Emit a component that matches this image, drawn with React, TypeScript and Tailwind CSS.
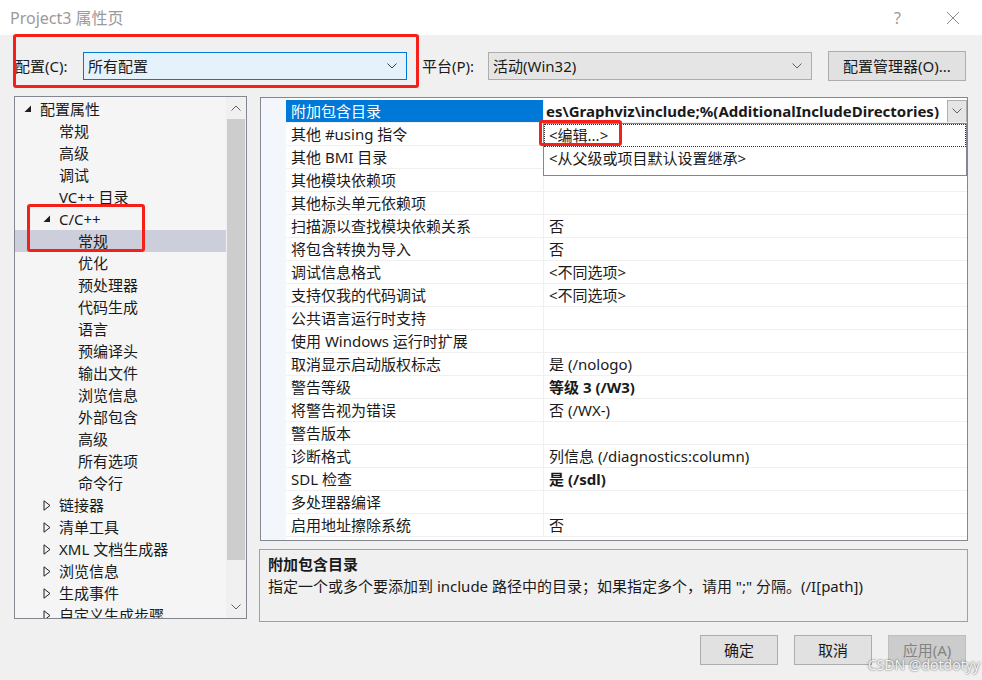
import React from 'react'

const font = "font-['Noto_Sans','Noto_Sans_CJK_SC',sans-serif]"

type TreeItem = {
  label: string
  level: number
  state?: 'open' | 'closed'
  selected?: boolean
}

const treeItems: TreeItem[] = [
  { label: '配置属性', level: 0, state: 'open' },
  { label: '常规', level: 1 },
  { label: '高级', level: 1 },
  { label: '调试', level: 1 },
  { label: 'VC++ 目录', level: 1 },
  { label: 'C/C++', level: 1, state: 'open' },
  { label: '常规', level: 2, selected: true },
  { label: '优化', level: 2 },
  { label: '预处理器', level: 2 },
  { label: '代码生成', level: 2 },
  { label: '语言', level: 2 },
  { label: '预编译头', level: 2 },
  { label: '输出文件', level: 2 },
  { label: '浏览信息', level: 2 },
  { label: '外部包含', level: 2 },
  { label: '高级', level: 2 },
  { label: '所有选项', level: 2 },
  { label: '命令行', level: 2 },
  { label: '链接器', level: 1, state: 'closed' },
  { label: '清单工具', level: 1, state: 'closed' },
  { label: 'XML 文档生成器', level: 1, state: 'closed' },
  { label: '浏览信息', level: 1, state: 'closed' },
  { label: '生成事件', level: 1, state: 'closed' },
  { label: '自定义生成步骤', level: 1, state: 'closed' },
]

// toggle column starts 9px in, each level adds 19px
const indent = ['pl-[9px]', 'pl-[28px]', 'pl-[47px]']

type Prop = { name: string; value?: string; bold?: boolean }

const props: Prop[] = [
  { name: '附加包含目录' },
  { name: '其他 #using 指令' },
  { name: '其他 BMI 目录' },
  { name: '其他模块依赖项' },
  { name: '其他标头单元依赖项' },
  { name: '扫描源以查找模块依赖关系', value: '否' },
  { name: '将包含转换为导入', value: '否' },
  { name: '调试信息格式', value: '<不同选项>' },
  { name: '支持仅我的代码调试', value: '<不同选项>' },
  { name: '公共语言运行时支持' },
  { name: '使用 Windows 运行时扩展' },
  { name: '取消显示启动版权标志', value: '是 (/nologo)' },
  { name: '警告等级', value: '等级 3 (/W3)', bold: true },
  { name: '将警告视为错误', value: '否 (/WX-)' },
  { name: '警告版本' },
  { name: '诊断格式', value: '列信息 (/diagnostics:column)' },
  { name: 'SDL 检查', value: '是 (/sdl)', bold: true },
  { name: '多处理器编译' },
  { name: '启用地址擦除系统', value: '否' },
]

function Chevron({ className = '' }: { className?: string }) {
  return (
    <svg width="10" height="6" viewBox="0 0 10 6" className={className}>
      <polyline points="0.5,0.5 5,5 9.5,0.5" fill="none" stroke="currentColor" strokeWidth="1" />
    </svg>
  )
}

function Toggle({ state }: { state?: 'open' | 'closed' }) {
  if (state === 'open')
    return (
      <svg width="8" height="8" viewBox="0 0 8 8">
        <polygon points="7,0.5 7,7 0.5,7" fill="#1e1e1e" />
      </svg>
    )
  if (state === 'closed')
    return (
      <svg width="8" height="11" viewBox="0 0 8 11">
        <polygon points="1,0.8 7,5.5 1,10.2" fill="none" stroke="#1e1e1e" strokeWidth="1" />
      </svg>
    )
  return null
}

function Tree() {
  return (
    <div className="w-[233px] h-[523px] border border-[#828790] bg-[#f5f5f5] flex overflow-hidden">
      <div className="flex-1 pt-[1px] overflow-hidden">
        {treeItems.map((item, i) => (
          <div
            key={i}
            className={`h-[22px] flex items-center whitespace-nowrap ${indent[item.level]} ${
              item.selected ? 'bg-[#cccedb]' : ''
            }`}
          >
            <span className="w-[16px] shrink-0 flex items-center">
              <Toggle state={item.state} />
            </span>
            <span className="leading-[22px]">{item.label}</span>
          </div>
        ))}
      </div>
      {/* scrollbar */}
      <div className="w-[20px] bg-[#f0f0f0] flex flex-col items-stretch">
        <div className="h-[22px] flex items-center justify-center text-[#606060]">
          <Chevron className="rotate-180" />
        </div>
        <div className="h-[441px] bg-[#cdcdcd] mx-[1px]" />
        <div className="flex-1" />
        <div className="h-[22px] flex items-center justify-center text-[#606060]">
          <Chevron />
        </div>
      </div>
    </div>
  )
}

function Grid() {
  return (
    <div className="relative h-[444px] ml-[1px] border border-[#828790] bg-white flex">
      <div className="w-[25px] bg-[#f3f6fb]" />
      <div className="flex-1 pt-[2px]">
        {props.map((p, i) => (
          <div key={i} className="h-[23px] flex border-b border-[#f0f0f0]">
            <div
              className={`w-[258px] pl-[5px] flex items-center whitespace-nowrap border-r border-[#f0f0f0] ${
                i === 0 ? 'bg-[#0078d7] text-white' : ''
              }`}
            >
              {p.name}
            </div>
            {i === 0 ? (
              <div className="flex-1 flex items-center overflow-hidden">
                <span className="flex-1 pl-[2px] font-bold whitespace-nowrap overflow-hidden">
                  es\Graphviz\include;%(AdditionalIncludeDirectories)
                </span>
                <div className="w-[20px] h-[23px] bg-[#e5e5e5] border border-[#adadad] flex items-center justify-center text-[#606060]">
                  <Chevron />
                </div>
              </div>
            ) : (
              <div className={`flex-1 pl-[5px] flex items-center whitespace-nowrap ${p.bold ? 'font-bold' : ''}`}>
                {p.value}
              </div>
            )}
          </div>
        ))}
      </div>
    </div>
  )
}

export default function App() {
  return (
    <div
      className={`${font} relative w-[982px] h-[680px] bg-[#f0f0f0] text-[15px] text-[#1a1a1a] leading-none overflow-hidden flex flex-col`}
    >
      {/* Title bar */}
      <div className="h-[35px] bg-white flex items-center pl-[10px] pr-[22px] text-[#9a9a9a]">
        <span className="text-[16px]">Project3 属性页</span>
        <span className="ml-auto text-[16px] mr-[45px]">?</span>
        <svg width="14" height="14" viewBox="0 0 14 14">
          <path d="M1 1 L13 13 M13 1 L1 13" stroke="#8a8a8a" strokeWidth="1" />
        </svg>
      </div>

      {/* Config row */}
      <div className="mt-[16px] h-[30px] pl-[15px] flex items-center">
        <span className="w-[68px]">配置(C):</span>
        <div className="w-[324px] h-[28px] bg-[#e5f1fb] border border-[#0078d7] flex items-center pl-[4px] pr-[9px]">
          <span className="flex-1">所有配置</span>
          <Chevron className="text-[#404040]" />
        </div>
        <span className="ml-[15px] w-[66px]">平台(P):</span>
        <div className="w-[324px] h-[28px] bg-[#e5e5e5] border border-[#adadad] flex items-center pl-[4px] pr-[9px]">
          <span className="flex-1">活动(Win32)</span>
          <Chevron className="text-[#606060]" />
        </div>
        <button className="ml-[16px] w-[138px] h-[30px] bg-[#e1e1e1] border border-[#adadad]">
          配置管理器(O)...
        </button>
      </div>

      {/* Main area */}
      <div className="mt-[15px] pl-[14px] flex gap-[12px]">
        <Tree />
        <div className="w-[709px] flex flex-col">
          <div className="mt-[1px]">
            <Grid />
          </div>
          <div className="mt-[8px] h-[73px] border border-[#a0a0a0] px-[8px] pt-[4px]">
            <div className="font-bold leading-[20px]">附加包含目录</div>
            <div className="leading-[20px] mt-[2px] whitespace-nowrap">
              指定一个或多个要添加到 include 路径中的目录；如果指定多个，请用 ";" 分隔。(/I[path])
            </div>
          </div>
        </div>
      </div>

      {/* Buttons */}
      <div className="mt-[13px] pr-[16px] flex justify-end gap-[16px]">
        <button className="w-[78px] h-[30px] bg-[#e1e1e1] border border-[#adadad]">确定</button>
        <button className="w-[78px] h-[30px] bg-[#e1e1e1] border border-[#adadad]">取消</button>
        <button className="w-[78px] h-[30px] bg-[#cccccc] border border-[#bfbfbf] text-[#838383]">
          应用(A)
        </button>
      </div>

      {/* Dropdown popup */}
      <div className="absolute left-[543px] top-[123px] w-[424px] h-[53px] bg-white border border-[#828790]">
        <div className="h-[23px] flex items-center pl-[4px] border border-dotted border-[#333]">&lt;编辑...&gt;</div>
        <div className="h-[23px] flex items-center pl-[5px]">&lt;从父级或项目默认设置继承&gt;</div>
      </div>

      {/* Red annotations */}
      <div className="absolute left-[13px] top-[34px] w-[406px] h-[54px] border-[3px] border-[#f5201a] rounded-[3px]" />
      <div className="absolute left-[27px] top-[204px] w-[118px] h-[48px] border-[3px] border-[#f5201a] rounded-[3px]" />
      <div className="absolute left-[539px] top-[120px] w-[83px] h-[26px] border-[3px] border-[#f5201a] rounded-[3px]" />

      {/* Watermark */}
      <div className="absolute right-[2px] bottom-[8px] text-[14px] text-[#f4f4f4] [text-shadow:0_0_2px_#444]">
        CSDN @dotdotyy
      </div>
    </div>
  )
}
